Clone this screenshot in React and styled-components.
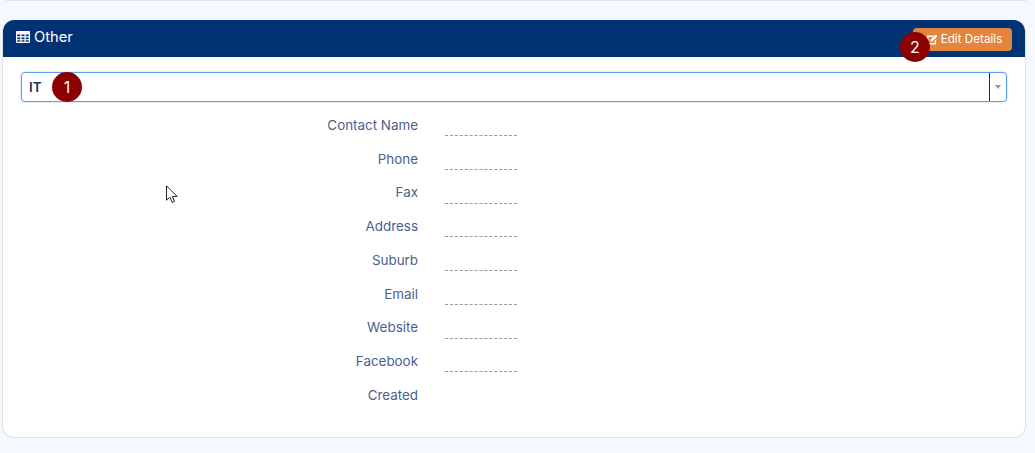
import React from 'react'
import styled, { createGlobalStyle } from 'styled-components'

const GlobalStyle = createGlobalStyle`
  html, body { margin: 0; padding: 0; }
  body {
    background: #f5f9ff;
    font-family: Inter, "Liberation Sans", sans-serif;
  }
`

const Page = styled.div`
  position: relative;
  width: 1035px;
  height: 453px;
  overflow: hidden;
  padding: 0 9px 0 2px;
  box-sizing: border-box;
`

const TopCardEdge = styled.div`
  height: 1px;
  margin: 0 0 19px 4px;
  background: #dfe3ea;
`

const Card = styled.section`
  height: 418px;
  box-sizing: border-box;
  background: #fff;
  border: 1px solid #dde1e8;
  border-top: 0;
  border-radius: 12px;
  overflow: hidden;
`

const CardHeader = styled.header`
  height: 37px;
  margin: 0 -1px;
  padding: 0 14px;
  display: flex;
  align-items: flex-start;
  justify-content: space-between;
  background: #003274;
  color: #fff;
`

const CardTitle = styled.h3`
  margin: 8px 0 0;
  display: flex;
  align-items: center;
  gap: 4px;
  font-size: 14.7px;
  line-height: 18px;
  font-weight: 400;
`

const EditButton = styled.button`
  margin-top: 8px;
  width: 99px;
  height: 23px;
  padding: 0 0 1px 3px;
  display: flex;
  align-items: center;
  justify-content: center;
  gap: 3px;
  border: 0;
  border-radius: 4px;
  background: #e3853f;
  color: #fff;
  font: 400 11.7px Inter, "Liberation Sans", sans-serif;
`

const CardBody = styled.div`
  padding: 15px 18px 0 18px;
`

const SelectBox = styled.div`
  height: 30px;
  box-sizing: border-box;
  display: flex;
  align-items: stretch;
  border: 1px solid #5b9bf0;
  border-radius: 4px;
  box-shadow: 0 0 2px rgba(91, 155, 240, 0.6);
`

const SelectValue = styled.div`
  flex: 1;
  padding-left: 7px;
  font-size: 13.4px;
  font-weight: 600;
  line-height: 29px;
  color: #1d3557;
`

const SelectArrow = styled.div`
  width: 16px;
  display: flex;
  align-items: center;
  justify-content: center;
  border-left: 1px solid #003274;
  &::after {
    content: '';
    border-left: 3px solid transparent;
    border-right: 3px solid transparent;
    border-top: 4px solid #999;
  }
`

const DetailList = styled.dl`
  margin: 12.9px 0 0;
  display: grid;
  grid-template-columns: 397px 72px;
  column-gap: 27px;
  grid-auto-rows: 33.75px;
`

const DetailLabel = styled.dt`
  text-align: right;
  font-size: 13.4px;
  line-height: 20px;
  color: #48618f;
`

const DetailValue = styled.dd`
  margin: 0;
  height: 20.3px;
  border-bottom: ${({ $empty }) => ($empty ? '0' : '1px dashed #999')};
`

const Marker = styled.span`
  position: absolute;
  left: ${({ $x }) => $x}px;
  top: ${({ $y }) => $y}px;
  width: 30px;
  height: 30px;
  border-radius: 50%;
  background: #8b0000;
  color: #fff;
  font-size: 16px;
  line-height: 30px;
  text-align: center;
`

const Cursor = styled.svg`
  position: absolute;
  left: 166px;
  top: 185px;
`

const fields = ['Contact Name', 'Phone', 'Fax', 'Address', 'Suburb', 'Email', 'Website', 'Facebook', 'Created']

function TableIcon() {
  return (
    <svg width="14" height="12" viewBox="0 0 14 12">
      <path
        fill="#fff"
        fillRule="evenodd"
        d="M1 0h12a1 1 0 0 1 1 1v10a1 1 0 0 1-1 1H1a1 1 0 0 1-1-1V1a1 1 0 0 1 1-1zM1.2 3.4v1.9h3.1V3.4zm4.3 0v1.9h3V3.4zm4.2 0v1.9h3.1V3.4zM1.2 6.4v1.9h3.1V6.4zm4.3 0v1.9h3V6.4zm4.2 0v1.9h3.1V6.4zM1.2 9.3v1.5h3.1V9.3zm4.3 0v1.5h3V9.3zm4.2 0v1.5h3.1V9.3z"
      />
    </svg>
  )
}

function EditIcon() {
  return (
    <svg width="12" height="11" viewBox="0 0 12 11">
      <path fill="#fff" d="M1 1.5h7L6.6 3H2.5v6h6.2V6.6l1.4-1.4v5.3H1z" />
      <path fill="#fff" d="M4.8 5.6 9.8.6l1.6 1.6-5 5-2 .5z" />
    </svg>
  )
}

export default function App() {
  return (
    <Page>
      <GlobalStyle />
      <TopCardEdge />
      <Card>
        <CardHeader>
          <CardTitle>
            <TableIcon />
            Other
          </CardTitle>
          <EditButton>
            <EditIcon />
            Edit Details
          </EditButton>
        </CardHeader>
        <CardBody>
          <SelectBox>
            <SelectValue>IT</SelectValue>
            <SelectArrow />
          </SelectBox>
          <DetailList>
            {fields.map((name) => (
              <React.Fragment key={name}>
                <DetailLabel>{name}</DetailLabel>
                <DetailValue $empty={name === 'Created'} />
              </React.Fragment>
            ))}
          </DetailList>
        </CardBody>
      </Card>
      <Marker $x={52} $y={72}>1</Marker>
      <Marker $x={900} $y={32}>2</Marker>
      <Cursor width="14" height="20" viewBox="0 0 14 20">
        <path
          fill="#fff"
          stroke="#222"
          strokeWidth="1"
          strokeLinejoin="round"
          d="M.5.8v14.4l3.4-3 2.2 5.2 2.4-1-2.2-5h4.8z"
        />
      </Cursor>
    </Page>
  )
}
